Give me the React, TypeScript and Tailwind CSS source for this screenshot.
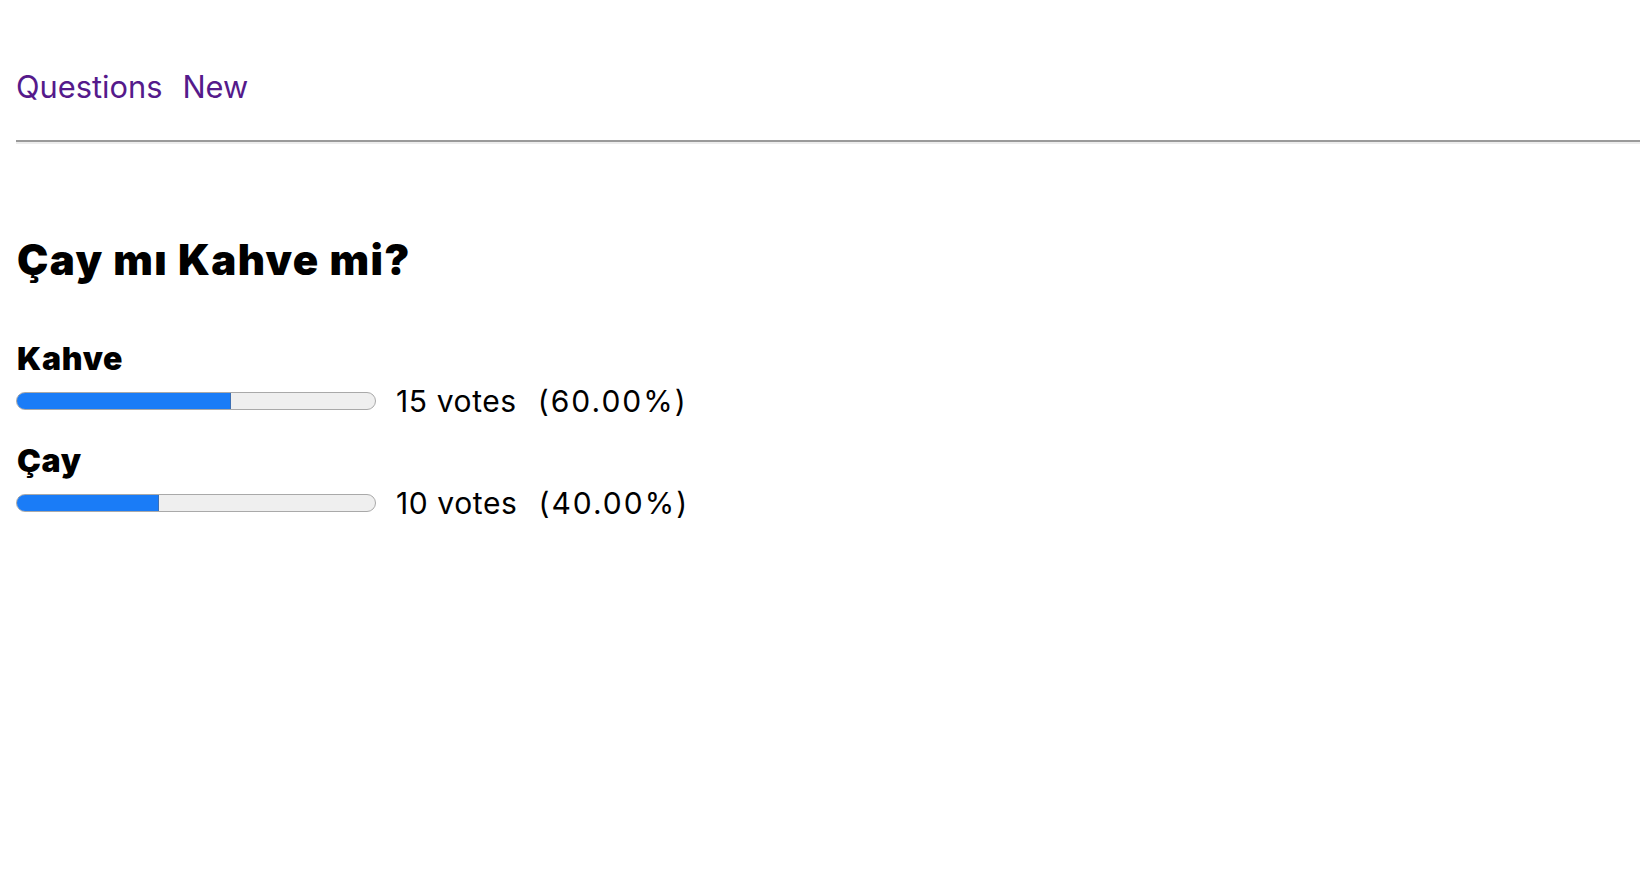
import React from "react";

const options = [
  { label: "Kahve", votes: 15, pct: 60 },
  { label: "Çay", votes: 10, pct: 40 },
];

export default function App() {
  return (
    <div
      className="min-h-screen bg-white pl-[16px] text-black"
      style={{ fontFamily: "Inter, 'Noto Sans', sans-serif" }}
    >
      <nav className="flex gap-[20px] pt-[69px] text-[30.8px] leading-[36px]">
        <a href="#" className="text-[#551a8b]">Questions</a>
        <a href="#" className="text-[#551a8b]">New</a>
      </nav>
      <div className="mt-[35px] h-0 border-t-2 border-b-2 border-t-[#9a9a9a] border-b-[#ededed]" />
      <h1 className="mt-[92px] pl-[1px] text-[42px] font-black leading-[48px] tracking-[1.4px]">
        Çay mı Kahve mi?
      </h1>
      <div className="mt-[57px] flex flex-col">
        {options.map((o) => (
          <div key={o.label} className="mb-[24px] flex flex-col">
            <div className="pl-[1px] text-[32px] font-black leading-[36px] tracking-[0.7px]">{o.label}</div>
            <div className="mt-[6px] flex h-[36px] items-center">
              <div className="relative h-[18px] w-[360px] overflow-hidden rounded-full border border-[#a9a9a9] bg-[#efefef]">
                <div
                  className="absolute left-[-1px] top-[-1px] bottom-[-1px] rounded-l-full border border-[#3c6fb4] bg-[#1a7cf7]"
                  style={{ width: `${o.pct}%` }}
                />
              </div>
              <span className="ml-[20px] text-[30px] leading-[36px] tracking-[0.6px]">{o.votes} votes</span>
              <span className="ml-[21px] text-[30px] leading-[36px] tracking-[2px]">({o.pct.toFixed(2)}%)</span>
            </div>
          </div>
        ))}
      </div>
    </div>
  );
}
